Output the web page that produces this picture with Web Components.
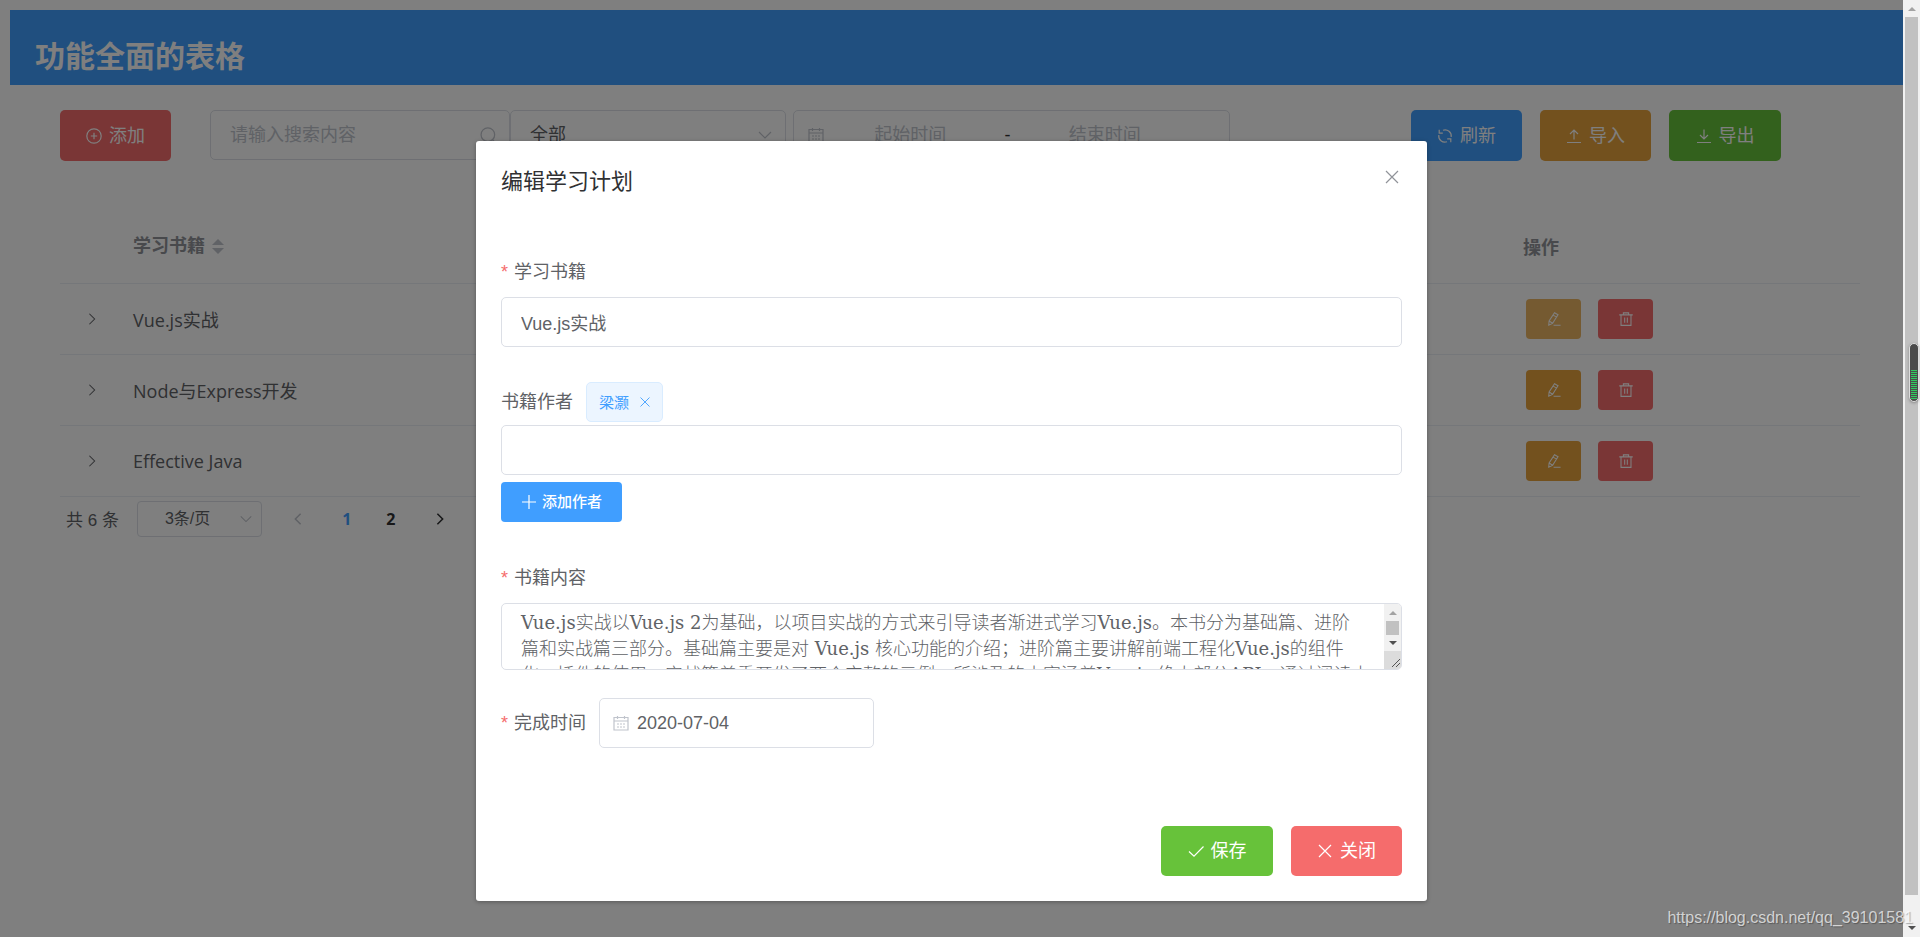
<!DOCTYPE html>
<html lang="zh-CN">
<head>
<meta charset="utf-8">
<title>功能全面的表格</title>
<style>
html,body{margin:0;height:100%}
body{font-family:"Liberation Sans","Noto Sans CJK SC",sans-serif;font-size:18px;color:#606266;background:#fff;overflow:hidden}
plan-app{height:100%}
</style>
</head>
<body>
<plan-app></plan-app>
<script>
const ICONS = {
  'circle-plus': '<circle cx="8" cy="8" r="7.2"/><path d="M8 4.8v6.4M4.8 8h6.4"/>',
  search: '<circle cx="7.4" cy="7.2" r="6.4"/><path d="M11.800 12l3.400 3.400"/>',
  down: '<path d="M2 5l6 6 6-6"/>',
  right: '<path d="M5 2l6 6-6 6"/>',
  left: '<path d="M11 2L5 8l6 6"/>',
  date: '<path d="M1 2.500h14v12.500H1zM1 6h14M4.500 1v3M11.500 1v3M4 9h2M7 9h2M10 9h2M4 12h2M7 12h2M10 12h2"/>',
  refresh: '<path d="M2.200 1.800v3.400h3.600M6 2.200A6.200 6.200 0 0 1 14.200 9M13.800 14.200v-3.400h-3.600M10 13.800A6.200 6.200 0 0 1 1.800 7"/>',
  upload: '<path d="M8 11.500V2M4 6l4-4 4 4M1 14.500h14"/>',
  download: '<path d="M8 1.500V11M4 7l4 4 4-4M1 14.500h14"/>',
  edit: '<path d="M8.600.800l4 2.300L6.400 13l-4.400 2 .4-4.700zM7 3.600l4 2.300M2.400 10.300l4 2.500M7.500 15.200h8"/>',
  trash: '<path d="M.300 3.300h15.400M5 3.300V1h6v2.300M2.300 3.300v12h11.400v-12M6.500 6.300v6M9.500 6.300v6"/>',
  close: '<path d="M2 2l12 12M14 2L2 14"/>',
  check: '<path d="M1 8.500l5 4.700L15.500 3.500"/>',
  plus: '<path d="M8 1v14M1 8h14"/>'
};
const define = (name, html, setup) => {
  const template = document.createElement('template');
  template.innerHTML = '<style>*{box-sizing:border-box}[hidden]{display:none!important}button,input,select,textarea{font:inherit;color:inherit;margin:0}</style>' + html;
  customElements.define(name, class extends HTMLElement {
    constructor() {
      super();
      this.attachShadow({mode: 'open'}).append(template.content.cloneNode(true));
    }
    connectedCallback() { if (setup) setup(this, this.shadowRoot); }
  });
};

define('ui-icon', `<style>
:host{display:inline-flex;flex:none;width:16px;height:16px}
svg{width:100%;height:100%;fill:none;stroke:currentColor;stroke-width:var(--stroke,1.2)}
</style><svg viewBox="0 0 16 16" aria-hidden="true"></svg>`, (el, root) => {
  root.querySelector('svg').innerHTML = ICONS[el.getAttribute('name')];
});

define('ui-button', `<style>
:host{display:block}
button{display:flex;align-items:center;justify-content:center;gap:7px;width:100%;min-width:111px;height:var(--button-height,51px);border:0;border-radius:5px;padding:0 24px;color:#fff;background:#409eff;line-height:24px;white-space:nowrap}
:host([type=danger]) button{background:#f56c6c}
:host([type=warning]) button{background:#e6a23c}
:host([type=success]) button{background:#67c23a;min-width:112px}
:host([focused]) button{background:#ebb563}
:host([size=icon]) button{min-width:0;width:55px;height:40px;padding:0;border-radius:4px}
:host([size=small]) button{min-width:0;height:40px;padding:0 20px;font-size:15px;font-weight:500;gap:5px;border-radius:4px}
:host([size=icon]) ui-icon{width:14px;height:14px}
</style><button type="button"><ui-icon></ui-icon><slot></slot></button>`, (el, root) => {
  const icon = document.createElement('ui-icon');
  icon.setAttribute('name', el.getAttribute('icon'));
  root.querySelector('ui-icon').replaceWith(icon);
  if (el.getAttribute('label')) root.querySelector('button').setAttribute('aria-label', el.getAttribute('label'));
});

define('search-box', `<style>
:host{display:flex;align-items:center;width:300px;height:50px;border:1px solid #dcdfe6;border-radius:5px;padding:0 12px 0 19px}
input{flex:1;min-width:0;border:0;padding:0;outline:0;background:none}
input::placeholder{color:#c0c4cc;opacity:1}
ui-icon{color:#c0c4cc;width:17px;height:17px}
</style><input type="text" placeholder="请输入搜索内容" aria-label="搜索内容"><ui-icon name="search"></ui-icon>`);

define('ui-select', `<style>
:host{display:grid;align-items:center;height:50px}
select,ui-icon{grid-area:1/1}
select{appearance:none;width:100%;height:100%;border:1px solid #dcdfe6;border-radius:5px;padding:0 36px 0 19px;background:none;outline:0}
ui-icon{justify-self:end;margin-right:13px;color:#c0c4cc;pointer-events:none}
:host([compact]){height:36px;font-size:16px}
:host([compact]) select{padding:0 28px 0 27px;border-radius:4px}
:host([compact]) ui-icon{width:14px;height:14px;margin-right:9px}
</style><select></select><ui-icon name="down"></ui-icon>`, (el, root) => {
  const select = root.querySelector('select');
  select.setAttribute('aria-label', el.getAttribute('label'));
  select.replaceChildren(...el.getAttribute('options').split(',').map(t => new Option(t)));
});

define('date-range', `<style>
:host{display:flex;align-items:center;width:437px;height:50px;border:1px solid #dcdfe6;border-radius:5px;padding:0 12px 0 14px;color:#303133}
ui-icon{color:#c0c4cc}
input{flex:1;min-width:0;border:0;padding:0;background:none;text-align:center;outline:0}
input::placeholder{color:#c0c4cc;opacity:1}
span{width:22px;text-align:center}
i{width:26px}
</style><ui-icon name="date"></ui-icon><input type="text" placeholder="起始时间" aria-label="起始时间"><span>-</span><input type="text" placeholder="结束时间" aria-label="结束时间"><i></i>`);

define('tool-bar', `<style>
:host{display:flex;align-items:flex-start;padding:25px 122px 0 50px}
.filters{display:flex;margin-left:39px}
.filters ui-select{width:276px;margin-right:7px}
.actions{display:flex;gap:18px;margin-left:auto}
</style>
<ui-button type="danger" icon="circle-plus">添加</ui-button>
<div class="filters"><search-box></search-box><ui-select label="类型" options="全部"></ui-select><date-range></date-range></div>
<div class="actions"><ui-button icon="refresh">刷新</ui-button><ui-button type="warning" icon="upload">导入</ui-button><ui-button type="success" icon="download">导出</ui-button></div>`);

define('book-table', `<style>
:host{display:block;font-family:"Open Sans","Noto Sans CJK SC",sans-serif}
table{width:100%;border-collapse:collapse;table-layout:fixed}
th,td{border-bottom:1px solid #ebeef5;padding:0;text-align:left;vertical-align:middle}
th{height:74px;color:#909399;font-weight:700}
.sortable{padding-bottom:4px}
td{height:71px}
.expand{width:73px}
.op{width:337px}
.sort{display:inline-grid;gap:3px;margin-left:7px;vertical-align:middle}
.sort i{border:6px solid transparent}
.sort i:first-child{border-top:0;border-bottom-color:#c0c4cc}
.sort i:last-child{border-bottom:0;border-top-color:#c0c4cc}
.toggle{display:block;border:0;background:none;padding:0;margin-left:25px;line-height:0}
.toggle ui-icon{width:14px;height:14px}
.ops{display:flex;gap:17px;padding-left:3px}
</style><table><thead><tr><th class="expand"></th><th class="sortable">学习书籍<span class="sort"><i></i><i></i></span></th><th class="op">操作</th></tr></thead><tbody></tbody></table>`, (el, root) => {
  root.querySelector('tbody').innerHTML = ['Vue.js实战', 'Node与Express开发', 'Effective Java'].map((name, i) => `<tr>
  <td><button class="toggle" type="button" aria-label="展开"><ui-icon name="right"></ui-icon></button></td><td>${name}</td>
  <td><div class="ops"><ui-button size="icon" type="warning" icon="edit" label="编辑" ${i ? '' : 'focused'}></ui-button><ui-button size="icon" type="danger" icon="trash" label="删除"></ui-button></div></td></tr>`).join('');
});

define('page-nav', `<style>
:host{display:flex;align-items:center;height:36px;margin-top:4px;padding-left:6px;font-size:17px}
ui-select{width:125px;margin:0 14px 0 18px}
button{display:flex;align-items:center;justify-content:center;width:44px;height:35px;border:0;padding:0;background:none;font-family:"Open Sans",sans-serif;font-size:16px;font-weight:700;color:#303133}
button[aria-current]{color:#409eff}
button:disabled{color:#c0c4cc}
.prev{margin-right:5px}.next{margin-left:5px}
ui-icon{--stroke:1.8;width:14px;height:14px}
</style><span>共 6 条</span><ui-select compact label="每页条数" options="3条/页"></ui-select>
<button class="prev" disabled aria-label="上一页"><ui-icon name="left"></ui-icon></button><button aria-current="page">1</button><button>2</button><button class="next" aria-label="下一页"><ui-icon name="right"></ui-icon></button>`);

define('author-tag', `<style>
:host{display:inline-flex;align-items:center;gap:10px;height:40px;padding:0 11px 0 12px;border:1px solid #d9ecff;border-radius:5px;background:#ecf5ff;color:#409eff;font-size:15px}
button{display:flex;border:0;padding:0;background:none}
ui-icon{width:12px;height:12px}
</style><slot></slot><button type="button" aria-label="移除作者"><ui-icon name="close"></ui-icon></button>`);

define('scroll-text', `<style>
:host{display:flex;height:67px;border:1px solid #dcdfe6;border-radius:5px;overflow:hidden}
textarea{flex:1;min-width:0;height:65px;border:0;outline:0;resize:none;overflow:hidden;padding:6px 0 0 19px;background:none;font-family:"DejaVu Serif","Noto Sans CJK SC",serif;font-size:18px;font-weight:300;line-height:26px;white-space:pre}
.bar{display:flex;flex-direction:column;align-items:center;width:17px;background:#f1f1f1}
.bar i{border:4px solid transparent}
.bar .up{border-top:0;border-bottom-color:#a3a3a3;margin:7px 0 6px}
.thumb{width:13px;height:14px;background:#c1c1c1}
.bar .dn{border-bottom:0;border-top-color:#505050;margin:6px 0}
svg{width:17px;height:18px;background:#dcdcdc;margin-top:auto}
</style><textarea aria-label="书籍内容"></textarea><div class="bar"><i class="up"></i><div class="thumb"></div><i class="dn"></i><svg viewBox="0 0 17 18" stroke="#555" fill="none"><path d="M8 16l8-8M12 16l4-4"/></svg></div>`, (el, root) => {
  root.querySelector('textarea').value = 'Vue.js实战以Vue.js 2为基础，以项目实战的方式来引导读者渐进式学习Vue.js。本书分为基础篇、进阶\n篇和实战篇三部分。基础篇主要是对 Vue.js 核心功能的介绍；进阶篇主要讲解前端工程化Vue.js的组件\n化、插件的使用；实战篇着重开发了两个完整的示例，所涉及的内容涵盖Vue.js 绝大部分API。通过阅读本\n书，读者能够掌握Vue.js框架主要功能的使用方法。';
});

define('plan-dialog', `<style>
:host{display:block;width:951px;background:#fff;border-radius:3px;box-shadow:0 1px 4px rgba(0,0,0,.3);padding:25px}
header{display:flex;align-items:flex-start;justify-content:space-between}
h2{margin:0;font-size:22px;line-height:32px;font-weight:400;color:#303133}
header button{display:flex;border:0;background:none;padding:0;margin:3px 2px 0;color:#909399}
label{display:block;line-height:50px}
label.req::before{content:"*";color:#f56c6c;margin-right:6px}
.text{display:block;width:100%;height:50px;border:1px solid #dcdfe6;border-radius:5px;padding:0 19px;outline:0}
.first{margin-top:49px}
.row{display:flex;align-items:center}
.authors{margin-top:31px;gap:13px;height:47px}
.authors label{line-height:40px}
.add{display:flex;margin-top:7px}
.body{margin-top:31px}
.when{margin-top:28px;gap:13px}
.date{display:flex;align-items:center;gap:8px;width:275px;height:50px;border:1px solid #dcdfe6;border-radius:5px;padding:0 13px;color:#c0c4cc}
.date input{flex:1;min-width:0;border:0;padding:0;outline:0;color:#606266}
footer{--button-height:50px;display:flex;justify-content:flex-end;gap:18px;margin-top:78px}
</style>
<header><h2>编辑学习计划</h2><button type="button" aria-label="关闭"><ui-icon name="close"></ui-icon></button></header>
<label class="req first" for="book">学习书籍</label>
<input class="text" id="book" type="text" value="Vue.js实战">
<div class="row authors"><label for="author">书籍作者</label><author-tag>梁灏</author-tag></div>
<input class="text" id="author" type="text">
<div class="add"><ui-button size="small" icon="plus">添加作者</ui-button></div>
<label class="req body">书籍内容</label>
<scroll-text></scroll-text>
<div class="row when"><label class="req" for="day">完成时间</label><div class="date"><ui-icon name="date"></ui-icon><input id="day" type="text" value="2020-07-04"></div></div>
<footer><ui-button type="success" icon="check">保存</ui-button><ui-button type="danger" icon="close">关闭</ui-button></footer>`);

define('page-scrollbar', `<style>
:host{display:flex;flex-direction:column;align-items:center;background:#f1f1f1;position:relative}
i{border:4px solid transparent}
.up{border-top:0;border-bottom-color:#a3a3a3;margin:7px 0 6px}
.thumb{flex:1;width:13px;background:#c1c1c1}
.dn{border-bottom:0;border-top-color:#505050;margin:31px 0 7px}
.meter{position:absolute;right:1px;top:343px;width:10px;height:59px;border:1px solid #ddd;border-radius:5px;padding:26px 1px 2px;background:#4b4b4b;box-shadow:0 1px 3px rgba(0,0,0,.3)}
.meter div{height:100%;background:repeating-linear-gradient(#2ecc5e 0 1px,#4b4b4b 1px 2px)}
</style><i class="up"></i><div class="thumb"></div><i class="dn"></i><div class="meter"><div></div></div>`);

define('plan-app', `<style>
:host{display:grid;grid-template-columns:1fr 17px;position:relative}
.page{padding:10px 0 0 10px;min-width:0}
.head{display:flex;align-items:center;height:75px;padding:19px 25px 0;background:#409eff;color:#fff}
h1{margin:0;font-size:30px;line-height:36px}
book-table{margin:48px 43px 0 50px}
page-nav{margin-left:50px}
.mask{position:absolute;inset:0 17px 0 0;display:flex;justify-content:center;align-items:flex-start;padding-top:141px;background:rgba(0,0,0,.5)}
.mark{position:absolute;right:7px;bottom:8px;font-size:16px;line-height:22px;color:rgba(255,255,255,.7);text-shadow:1px 1px 1px rgba(0,0,0,.3)}
</style>
<div class="page"><div class="head"><h1>功能全面的表格</h1></div><tool-bar></tool-bar><book-table></book-table><page-nav></page-nav></div>
<page-scrollbar></page-scrollbar>
<div class="mask"><plan-dialog role="dialog" aria-label="编辑学习计划"></plan-dialog></div>
<div class="mark">https://blog.csdn.net/qq_39101581</div>`);
</script>
</body>
</html>
